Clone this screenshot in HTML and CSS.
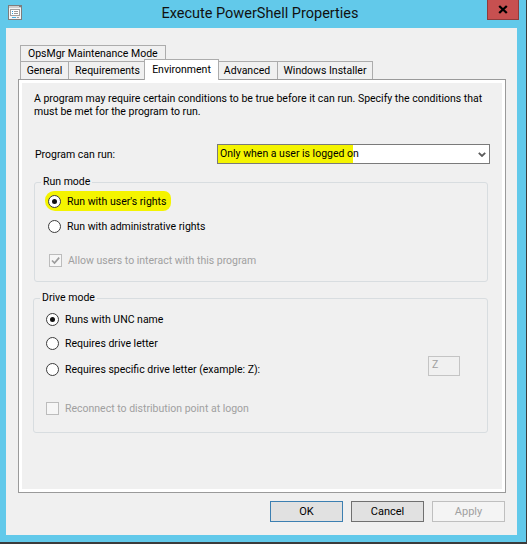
FILE: index.html
```html
<!DOCTYPE html>
<html lang="en">
<head>
    <meta charset="UTF-8">
    <title>Execute PowerShell Properties</title>
    <link rel="stylesheet" href="styles.css">
</head>
<body>
    <div class="window">
        <div class="titlebar">
            <div class="title-left">
                <svg class="app-icon" width="14" height="15" viewBox="0 0 14 15">
                    <rect x="0.5" y="0.5" width="13" height="14" fill="#f4f4f4" stroke="#7d7d7d"/>
                    <rect x="1" y="1" width="12" height="2" fill="#cfcfcf"/>
                    <rect x="11" y="1" width="2" height="1" fill="#7d7d7d"/>
                    <rect x="2.5" y="4.5" width="9" height="6" fill="#fff" stroke="#a0a0a0"/>
                    <rect x="4" y="6" width="1" height="1" fill="#2f9ad6"/>
                    <rect x="6" y="6" width="4" height="1" fill="#9a9a9a"/>
                    <rect x="4" y="8" width="1" height="1" fill="#2f9ad6"/>
                    <rect x="6" y="8" width="4" height="1" fill="#9a9a9a"/>
                    <rect x="4" y="12" width="4" height="1" fill="#3fb0e8"/>
                    <rect x="9" y="12" width="2" height="1" fill="#a0a0a0"/>
                </svg>
            </div>
            <div class="title">Execute PowerShell Properties</div>
            <div class="title-right">
                <div class="close-btn">
                    <svg width="10" height="9" viewBox="0 0 10 9">
                        <path d="M1.2 1 L8.8 8 M8.8 1 L1.2 8" stroke="#000" stroke-width="2.3" fill="none"/>
                    </svg>
                </div>
            </div>
        </div>

        <div class="client">
            <div class="tabs">
                <div class="tab-row tab-row-top">
                    <div class="tab">OpsMgr Maintenance Mode</div>
                </div>
                <div class="tab-row tab-row-main">
                    <div class="tab tab-general">General</div>
                    <div class="tab tab-requirements">Requirements</div>
                    <div class="tab tab-environment active">Environment</div>
                    <div class="tab tab-advanced">Advanced</div>
                    <div class="tab tab-installer">Windows Installer</div>
                </div>
            </div>

            <div class="panel">
                <div class="page">
                    <p class="desc">A program may require certain conditions to be true before it can run. Specify the conditions that<br>must be met for the program to run.</p>

                    <div class="field-row">
                        <label>Program can run:</label>
                        <div class="combo">
                            <span class="combo-value">Only when a user is logged on</span>
                            <svg class="chevron" width="8" height="5" viewBox="0 0 8 5">
                                <path d="M0.8 0.8 L4 4 L7.2 0.8" stroke="#5a5a5a" stroke-width="1.8" fill="none"/>
                            </svg>
                        </div>
                    </div>

                    <fieldset class="group group-run">
                        <legend>Run mode</legend>
                        <div class="option marked"><span class="radio checked"></span><span>Run with user's rights</span></div>
                        <div class="option gap-9"><span class="radio"></span><span>Run with administrative rights</span></div>
                        <div class="option option-check gap-18 disabled">
                            <span class="checkbox">
                                <svg width="11" height="11" viewBox="0 0 11 11"><path d="M2 5.5 L4.5 8 L9.2 2.6" stroke="#9c9c9c" stroke-width="1.7" fill="none"/></svg>
                            </span>
                            <span>Allow users to interact with this program</span>
                        </div>
                    </fieldset>

                    <fieldset class="group group-drive">
                        <legend>Drive mode</legend>
                        <div class="option"><span class="radio checked"></span><span>Runs with UNC name</span></div>
                        <div class="option gap-8"><span class="radio"></span><span>Requires drive letter</span></div>
                        <div class="option gap-10">
                            <span class="radio"></span><span>Requires specific drive letter (example: Z):</span>
                            <span class="drive-box">Z</span>
                        </div>
                        <div class="option gap-23 disabled"><span class="checkbox"></span><span>Reconnect to distribution point at logon</span></div>
                    </fieldset>
                </div>
            </div>

            <div class="buttons">
                <button class="btn btn-default">OK</button>
                <button class="btn btn-focus">Cancel</button>
                <button class="btn" disabled>Apply</button>
            </div>
        </div>
    </div>
</body>
</html>
```

FILE: styles.css
```css
body {
    margin: 0;
    background: #3b3b3b;
    font-family: Roboto, 'Noto Sans', sans-serif;
    font-size: 10.5px;
    color: #000;
}
.window {
    width: 526px;
    height: 542px;
    background: #62c9ea;
    display: flex;
    flex-direction: column;
}
.titlebar {
    height: 28px;
    display: grid;
    grid-template-columns: 1fr auto 1fr;
    flex: none;
}
.title-left {
    padding: 5px 0 0 8px;
}
.app-icon {
    display: block;
}
.title {
    font-size: 14.5px;
    line-height: 28px;
    color: #111;
    margin-right: 6px;
}
.title-right {
    display: flex;
    justify-content: flex-end;
    align-items: flex-start;
    padding-right: 7px;
}
.close-btn {
    width: 32px;
    height: 20px;
    box-sizing: border-box;
    background: #c75050;
    border: 1px solid #8e3b3b;
    border-top: none;
    display: flex;
    align-items: center;
    justify-content: center;
}
.client {
    flex: 1;
    margin: 0 9px 7px 6px;
    background: #f0f0f0;
    padding: 17px 11px 13px 12px;
    display: flex;
    flex-direction: column;
}

/* tabs */
.tabs {
    padding-left: 2px;
    position: relative;
    z-index: 1;
}
.tab-row {
    display: flex;
}
.tab {
    box-sizing: border-box;
    border: 1px solid #acacac;
    border-bottom: none;
    padding: 0 7px;
    background: #f0f0f0;
    white-space: nowrap;
    text-align: center;
}
.tab + .tab {
    margin-left: -1px;
}
.tab-row-top .tab {
    height: 16px;
    line-height: 15px;
}
.tab-row-main .tab {
    height: 18px;
    line-height: 17px;
    padding: 0;
    flex: none;
}
.tab-general { width: 49px; }
.tab-requirements { width: 79px; }
.tab-environment { width: 75px; }
.tab-advanced { width: 62px; }
.tab-installer { width: 96px; }
.tab-row-main .tab.active {
    background: #fff;
    height: 21px;
    line-height: 19px;
    margin: -2px -2px -1px -3px;
    position: relative;
    z-index: 2;
}

/* panel */
.panel {
    height: 414px;
    box-sizing: border-box;
    border: 1px solid #9a9a9a;
    background: #fff;
    padding: 3px;
}
.page {
    height: 100%;
    box-sizing: border-box;
    background: #f0f0f0;
    padding-top: 9px;
}
.desc {
    margin: 0;
    padding: 0 12px;
    line-height: 13px;
    white-space: nowrap;
}
.field-row {
    display: flex;
    align-items: center;
    margin: 26px 12px 0 13px;
}
.field-row label {
    width: 182px;
    flex: none;
}
.combo {
    flex: 1;
    height: 20px;
    box-sizing: border-box;
    border: 1px solid #7a7a7a;
    background: #fff;
    display: flex;
    align-items: center;
    padding-right: 3px;
}
.combo-value {
    flex: 1;
    align-self: stretch;
    line-height: 18px;
    padding-left: 2px;
    background: linear-gradient(#f4f400, #f4f400) no-repeat;
    background-size: 135px 100%;
}

/* group boxes */
.group {
    margin: 11px 14px 0 12px;
    padding: 4px 0 13px 0;
    border: 1px solid #d8dde0;
    border-radius: 3px;
    min-width: 0;
}
.group legend {
    padding: 0 2px;
    margin-left: 6px;
    line-height: 14px;
}
.group-drive {
    margin: 9px 14px 0 11px;
    padding: 6px 0 16px 0;
}
.option {
    display: flex;
    align-items: center;
    gap: 6px;
    height: 16px;
    margin-left: 13px;
    white-space: nowrap;
}
.group-drive .option {
    margin-left: 12px;
}
.option-check {
    margin-left: 14px;
}
.gap-8 { margin-top: 8px; }
.gap-9 { margin-top: 9px; }
.gap-10 { margin-top: 10px; }
.gap-18 { margin-top: 18px; }
.gap-23 { margin-top: 23px; }
.option.disabled {
    color: #a0a0a0;
}
.option.marked {
    width: max-content;
    position: relative;
    z-index: 0;
}
.option.marked::before {
    content: "";
    position: absolute;
    left: -3px;
    right: -5px;
    top: -2px;
    bottom: -2px;
    background: #f4f400;
    border-radius: 9px 7px 8px 10px;
    z-index: -1;
}
.radio {
    width: 13px;
    height: 13px;
    box-sizing: border-box;
    border: 1px solid #3c3c3c;
    border-radius: 50%;
    background: #fff;
    flex: none;
    display: flex;
    align-items: center;
    justify-content: center;
}
.radio.checked::after {
    content: "";
    width: 5px;
    height: 5px;
    border-radius: 50%;
    background: #111;
}
.checkbox {
    width: 13px;
    height: 13px;
    box-sizing: border-box;
    border: 1px solid #bcbcbc;
    background: #f6f6f6;
    flex: none;
    display: flex;
    align-items: center;
    justify-content: center;
}
.checkbox svg {
    display: block;
}
.drive-box {
    margin: 0 27px 7px auto;
    width: 32px;
    height: 20px;
    box-sizing: border-box;
    border: 1px solid #c4c4c4;
    background: #f0f0f0;
    color: #a0a0a0;
    padding: 1px 0 0 3px;
    line-height: 13px;
}

/* buttons */
.buttons {
    display: flex;
    justify-content: flex-end;
    gap: 8px;
    margin-top: 8px;
    padding-right: 1px;
}
.btn {
    width: 73px;
    height: 21px;
    box-sizing: border-box;
    border: 1px solid #adadad;
    background: #e1e1e1;
    font: inherit;
    font-size: 11px;
    color: #000;
    padding: 0;
}
.btn-default {
    border-color: #3c7fb1;
}
.btn-focus {
    border-color: #707070;
}
.btn:disabled {
    background: #f4f4f4;
    border-color: #bfbfbf;
    color: #a0a0a0;
}
```
